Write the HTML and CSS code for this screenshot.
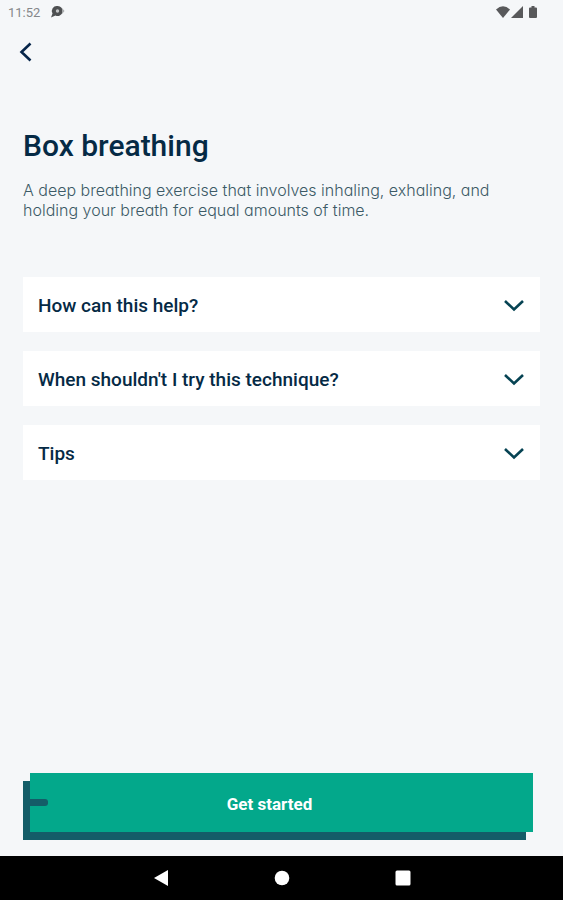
FILE: index.html
```html
<!DOCTYPE html>
<html lang="en">
<head>
<meta charset="utf-8">
<meta name="viewport" content="width=device-width, initial-scale=1">
<title>Box breathing</title>
<link rel="stylesheet" href="styles.css">
</head>
<body>
<div class="status">
  <div class="status-group">
    <span>11:52</span>
    <svg width="16" height="14" viewBox="0 0 16 14" aria-hidden="true"><path d="M7.500 1a5 5 0 1 1-2 9.500L1 12.500 2.500 8.500A5 5 0 0 1 7.500 1z" fill="#4e5052"/><circle cx="7.500" cy="6" r="1.700" fill="#c4c6c7"/><path d="M12 3l2.500 3L12 9z" fill="#a8abad"/></svg>
  </div>
  <div class="status-icons">
    <svg width="14" height="12" viewBox="0 0 14 12" aria-hidden="true"><path d="M0 3.500Q7-3 14 3.500L7 12z" fill="#58595b"/></svg>
    <svg width="12" height="12" viewBox="0 0 12 12" aria-hidden="true"><path d="M12 0v12H0z" fill="#58595b"/></svg>
    <svg width="8" height="12" viewBox="0 0 8 12" aria-hidden="true"><path d="M2.500 0h3v1.500H7q1 0 1 1V11q0 1-1 1H1q-1 0-1-1V2.500q0-1 1-1h1.500z" fill="#58595b"/></svg>
  </div>
</div>
<header class="toolbar">
  <button class="back" type="button" aria-label="Back"><svg width="14" height="20" viewBox="0 0 14 20" aria-hidden="true"><path d="M11.500 1.500L2.500 10l9 8.500" fill="none" stroke="#06254a" stroke-width="2.600"/></svg></button>
</header>
<main class="content">
  <h1>Box breathing</h1>
  <p class="intro">A deep breathing exercise that involves inhaling, exhaling, and holding your breath for equal amounts of time.</p>
  <div class="topics">
    <button class="topic" type="button" aria-expanded="false"><span>How can this help?</span><svg width="20" height="14" viewBox="0 0 20 14" aria-hidden="true"><path d="M1 2l9 8.500L19 2"/></svg></button>
    <button class="topic" type="button" aria-expanded="false"><span>When shouldn't I try this technique?</span><svg width="20" height="14" viewBox="0 0 20 14" aria-hidden="true"><path d="M1 2l9 8.500L19 2"/></svg></button>
    <button class="topic" type="button" aria-expanded="false"><span>Tips</span><svg width="20" height="14" viewBox="0 0 20 14" aria-hidden="true"><path d="M1 2l9 8.500L19 2"/></svg></button>
  </div>
  <button class="start" type="button">Get started</button>
</main>
<nav class="system-nav" aria-label="System">
  <button type="button" aria-label="Back"><svg width="16" height="16" viewBox="0 0 16 16" aria-hidden="true"><path d="M15 0v16L1 8z"/></svg></button>
  <button type="button" aria-label="Home"><svg width="16" height="16" viewBox="0 0 16 16" aria-hidden="true"><circle cx="8" cy="8" r="7.300"/></svg></button>
  <button type="button" aria-label="Recent apps"><svg width="16" height="16" viewBox="0 0 16 16" aria-hidden="true"><rect x=".5" y=".5" width="15" height="15" rx="1.500"/></svg></button>
</nav>
</body>
</html>
```
FILE: styles.css
```css
* {
  box-sizing: border-box;
}

body {
  margin: 0;
  min-height: 100vh;
  display: flex;
  flex-direction: column;
  background: #f5f7f9;
  color: #06254a;
  font-family: Roboto, sans-serif;
}

button {
  border: 0;
  padding: 0;
  background: none;
  color: inherit;
  font: inherit;
  cursor: pointer;
}

svg {
  display: block;
  flex: none;
}

.status {
  display: flex;
  justify-content: space-between;
  align-items: center;
  height: 24px;
  padding: 0 26px 0 8px;
  color: #85878a;
  font-size: 13px;
}

.status-group {
  display: flex;
  align-items: center;
  gap: 10px;
}

.status-icons {
  display: flex;
  gap: 1px;
}

.status-icons svg:last-child {
  margin-left: 5px;
}

.toolbar {
  height: 56px;
  padding: 16px 19px;
}

.back {
  display: block;
  padding: 2px 0;
}

.content {
  flex: 1;
  display: flex;
  flex-direction: column;
  padding: 48px 23px 16px;
}

h1 {
  margin: 0;
  color: #052a45;
  font-size: 30px;
  font-weight: 500;
  line-height: 36px;
}

.intro {
  margin: 16px 0 57px;
  color: #3c5a66;
  font-family: Inter, sans-serif;
  font-feature-settings: "cv11";
  font-size: 16px;
  font-weight: 300;
  line-height: 20px;
}

.topics {
  display: flex;
  flex-direction: column;
  gap: 19px;
  margin-bottom: 40px;
}

.topic {
  display: flex;
  justify-content: space-between;
  align-items: center;
  min-height: 55px;
  padding: 9px 16px 7px 15px;
  background: #fff;
  color: #052a45;
  font-size: 19px;
  font-weight: 500;
  line-height: 24px;
  text-align: left;
}

.topic path {
  fill: none;
  stroke: #064353;
  stroke-width: 2.6;
}

.start {
  position: relative;
  min-height: 59px;
  margin: auto 7px 8px;
  padding: 2px 24px 0 0;
  background: #03a88b;
  box-shadow: -7px 8px #145d68;
  color: #fff;
  font-size: 17px;
  font-weight: 700;
}

.start::before {
  content: "";
  position: absolute;
  left: 0;
  top: 26px;
  width: 18px;
  height: 7px;
  border-radius: 0 3px 3px 0;
  background: #145d68;
}

.system-nav {
  display: flex;
  justify-content: center;
  align-items: center;
  gap: 105px;
  height: 44px;
  background: #000;
}

.system-nav svg {
  fill: #fff;
}
```
